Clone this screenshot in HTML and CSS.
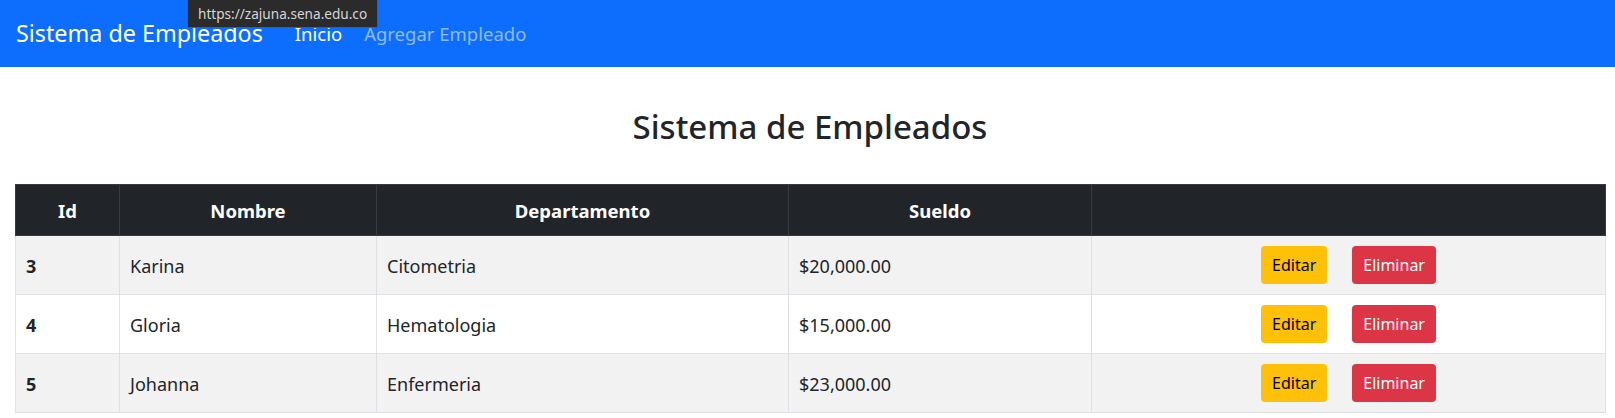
FILE: index.html
```html
<!DOCTYPE html>
<html lang="es">
<head>
<meta charset="utf-8">
<title>Sistema de Empleados</title>
<link rel="stylesheet" href="styles.css">
</head>
<body>
<nav class="navbar">
  <a class="brand" href="#">Sistema de Empleados</a>
  <ul class="nav">
    <li><a class="nav-link active" href="#">Inicio</a></li>
    <li><a class="nav-link" href="#">Agregar Empleado</a></li>
  </ul>
  <div class="tooltip">https://zajuna.sena.edu.co</div>
</nav>
<main class="container">
  <h2 class="title">Sistema de Empleados</h2>
  <table class="table">
    <colgroup>
      <col class="c-id"><col class="c-nombre"><col class="c-dep"><col class="c-sueldo"><col class="c-acc">
    </colgroup>
    <thead>
      <tr><th>Id</th><th>Nombre</th><th>Departamento</th><th>Sueldo</th><th></th></tr>
    </thead>
    <tbody>
      <tr class="odd"><th>3</th><td>Karina</td><td>Citometria</td><td>$20,000.00</td><td class="acc"><div class="actions"><a class="btn btn-warning" href="#">Editar</a><a class="btn btn-danger" href="#">Eliminar</a></div></td></tr>
      <tr><th>4</th><td>Gloria</td><td>Hematologia</td><td>$15,000.00</td><td class="acc"><div class="actions"><a class="btn btn-warning" href="#">Editar</a><a class="btn btn-danger" href="#">Eliminar</a></div></td></tr>
      <tr class="odd"><th>5</th><td>Johanna</td><td>Enfermeria</td><td>$23,000.00</td><td class="acc"><div class="actions"><a class="btn btn-warning" href="#">Editar</a><a class="btn btn-danger" href="#">Eliminar</a></div></td></tr>
    </tbody>
  </table>
</main>
</body>
</html>
```
FILE: styles.css
```css
* { box-sizing: border-box; }
body {
  margin: 0;
  font-family: "Noto Sans", "Open Sans", sans-serif;
  font-size: 16px;
  line-height: 1.5;
  color: #212529;
  background: #fff;
}
a { text-decoration: none; }
.navbar {
  position: relative;
  height: 67px;
  background: #0d6efd;
  display: flex;
  align-items: center;
  padding: 0 15px 0 16px;
}
.brand {
  color: #fff;
  font-size: 23.3px;
  margin-right: 21px;
  white-space: nowrap;
}
.nav {
  display: flex;
  list-style: none;
  margin: 0;
  padding: 0;
}
.nav-link {
  display: block;
  padding: 8px 11px;
  color: rgba(255,255,255,.55);
  font-size: 18.5px;
}
.nav-link.active { color: #fff; }
.tooltip {
  position: absolute;
  left: 187px;
  top: -1px;
  height: 29px;
  padding: 0 10px;
  background: #2b2b2b;
  border: 1px solid #5a5a5a;
  color: #d6d6d6;
  font-size: 13.6px;
  line-height: 27px;
  white-space: nowrap;
}
.container {
  padding: 0 10px 0 15px;
}
.title {
  margin: 0;
  padding: 40px 0 37px;
  font-size: 33px;
  font-weight: 500;
  line-height: 1.2;
  text-align: center;
}
.table {
  width: 1590px;
  border-collapse: collapse;
  table-layout: fixed;
  font-size: 18px;
}
.c-id { width: 104px; }
.c-nombre { width: 257px; }
.c-dep { width: 412px; }
.c-sueldo { width: 303px; }
.c-acc { width: 514px; }
.table th, .table td {
  border: 1px solid #dee2e6;
  padding: 12px 10px 8px;
  text-align: left;
  vertical-align: middle;
}
.table td.acc { padding: 10px; }
.table thead th {
  background: #212529;
  color: #fff;
  border-color: #373b3e;
  text-align: center;
  font-weight: 700;
  font-size: 18.5px;
  height: 51px;
  padding: 11px 10px 9px;
}
.table tbody tr { height: 59px; }
.table tbody tr.odd { background: #f2f2f2; }
.table tbody th { font-weight: 700; }
.actions {
  display: flex;
  justify-content: center;
  gap: 25px;
}
.btn {
  display: inline-block;
  height: 38px;
  padding: 0 11px;
  border-radius: 4px;
  line-height: 38px;
  font-size: 16px;
}
.btn-warning { background: #ffc107; color: #000; }
.btn-danger { background: #dc3545; color: #fff; }
```
